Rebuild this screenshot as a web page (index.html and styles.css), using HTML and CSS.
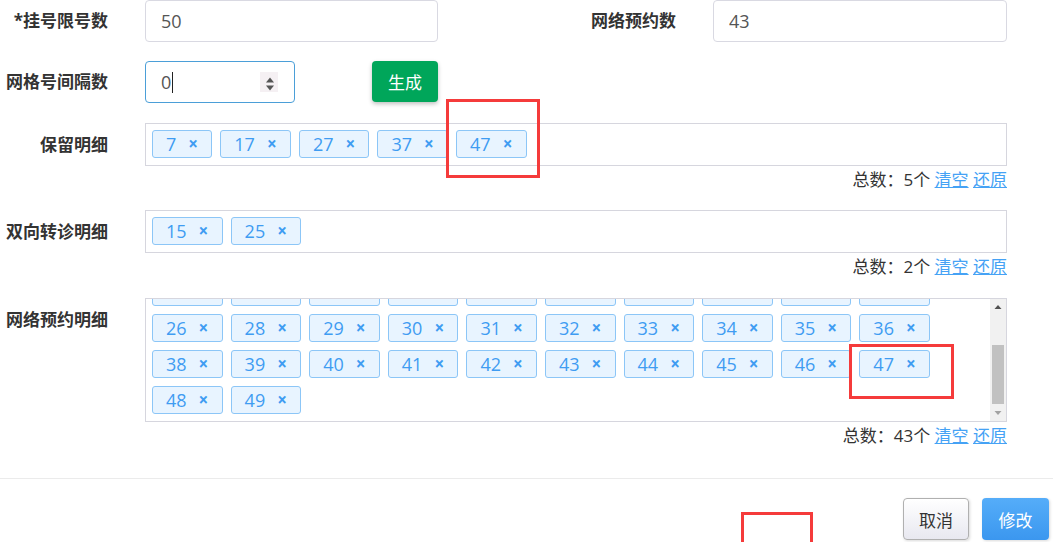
FILE: index.html
```html
<!DOCTYPE html>
<html lang="zh-CN">
<head>
    <meta charset="UTF-8">
    <meta name="viewport" content="width=device-width, initial-scale=1.0">
    <title>号源设置</title>
    <link rel="stylesheet" href="styles.css">
</head>
<body>
    <div class="form">
        <div class="row row-split">
            <div class="field">
                <label class="label">*挂号限号数</label>
                <input class="input" type="text" value="50">
            </div>
            <div class="field">
                <label class="label">网络预约数</label>
                <input class="input" type="text" value="43">
            </div>
        </div>

        <div class="row row-2">
            <label class="label">网格号间隔数</label>
            <div class="num-field">
                <span>0</span><span class="caret"></span>
                <span class="spin">
                    <svg width="18" height="20" viewBox="0 0 18 20"><path d="M6 10.5 L14 10.5 L10 5.5 Z" fill="#555"/><path d="M6 13.5 L14 13.5 L10 18.5 Z" fill="#555"/></svg>
                </span>
            </div>
            <button class="btn btn-green">生成</button>
        </div>

        <!-- 保留明细 -->
        <div class="row row-tags row-3">
            <label class="label">保留明细</label>
            <div class="tag-wrap">
                <div class="tag-box" id="keep-list"></div>
                <div class="summary">总数：5个 <a href="#">清空</a> <a href="#">还原</a></div>
            </div>
        </div>

        <!-- 双向转诊明细 -->
        <div class="row row-tags row-4">
            <label class="label">双向转诊明细</label>
            <div class="tag-wrap">
                <div class="tag-box" id="transfer-list"></div>
                <div class="summary">总数：2个 <a href="#">清空</a> <a href="#">还原</a></div>
            </div>
        </div>

        <!-- 网络预约明细 -->
        <div class="row row-tags row-5">
            <label class="label">网络预约明细</label>
            <div class="tag-wrap">
                <div class="scroll-wrap">
                    <div class="tag-box scroll" id="net-list"></div>
                    <div class="scrollbar">
                        <span class="sb-btn"><svg width="16" height="17" viewBox="0 0 16 17"><path d="M4.5 10 L11.5 10 L8 6 Z" fill="#505050"/></svg></span>
                        <span class="sb-track"><span class="sb-thumb"></span></span>
                        <span class="sb-btn"><svg width="16" height="17" viewBox="0 0 16 17"><path d="M4.5 7 L11.5 7 L8 11 Z" fill="#a3a3a3"/></svg></span>
                    </div>
                </div>
                <div class="summary">总数：43个 <a href="#">清空</a> <a href="#">还原</a></div>
            </div>
        </div>
    </div>

    <div class="footer">
        <button class="btn btn-default">取消</button>
        <button class="btn btn-primary">修改</button>
    </div>

    <div class="mark mark-1"></div>
    <div class="mark mark-2"></div>
    <div class="mark mark-3"></div>

    <script>
        const keep = [7, 17, 27, 37, 47];
        const transfer = [15, 25];
        const net = [];
        for (let i = 1; i <= 49; i++) {
            if (transfer.includes(i)) continue;
            if (keep.includes(i) && i !== 47) continue;
            net.push(i);
        }

        function renderTags(id, list) {
            const box = document.getElementById(id);
            box.innerHTML = '';
            list.forEach(n => {
                box.innerHTML += `<span class="tag">${n}<span class="x">×</span></span>`;
            });
        }

        renderTags('keep-list', keep);
        renderTags('transfer-list', transfer);
        renderTags('net-list', net);

        // 滚动到底部
        const netBox = document.getElementById('net-list');
        netBox.scrollTop = netBox.scrollHeight;
    </script>
</body>
</html>
```

FILE: styles.css
```css
* { margin: 0; padding: 0; box-sizing: border-box; }
body {
    width: 1053px;
    height: 542px;
    overflow: hidden;
    position: relative;
    font-family: "Open Sans", "Noto Sans CJK SC", sans-serif;
    font-size: 17px;
    color: #333;
    background: #fff;
}
.form { width: 1007px; }
.row { display: flex; align-items: flex-start; }
.row-2 { margin-top: 19px; }
.row-3 { margin-top: 20px; }
.row-4 { margin-top: 18px; }
.row-5 { margin-top: 19px; }
.label {
    width: 108px;
    flex: none;
    margin-right: 37px;
    text-align: right;
    font-weight: bold;
    line-height: 42px;
    white-space: nowrap;
}
.row-tags .label { line-height: 44px; }
.row-split {
    display: grid;
    grid-template-columns: 438px 439px;
    column-gap: 130px;
}
.field { display: flex; }
.input {
    flex: 1;
    min-width: 0;
    height: 42px;
    padding: 0 15px;
    border: 1px solid #d9d9e2;
    border-radius: 4px;
    font: inherit;
    font-size: 18px;
    color: #555;
    outline: none;
}
.num-field {
    width: 150px;
    height: 42px;
    display: flex;
    align-items: center;
    padding-left: 15px;
    border: 1px solid #4b9fd8;
    border-radius: 4px;
    font-size: 18px;
    color: #555;
}
.caret {
    width: 1px;
    height: 21px;
    margin-left: 1px;
    background: #222;
}
.spin {
    margin-left: auto;
    margin-right: 16px;
    width: 18px;
    height: 20px;
    background: #f5f0f3;
    display: flex;
}
.btn {
    height: 42px;
    width: 66px;
    border-radius: 4px;
    font: inherit;
    cursor: pointer;
}
.btn-green {
    margin-left: 77px;
    height: 41px;
    border: none;
    background: #00a65a;
    color: white;
    box-shadow: 0 2px 4px rgba(0, 0, 0, 0.25);
}
.tag-wrap { flex: 1; min-width: 0; }
.tag-box {
    min-height: 43px;
    padding: 6px 6px 7px;
    border: 1px solid #d6d6de;
    display: flex;
    flex-wrap: wrap;
    align-content: flex-start;
    gap: 8px;
}
.scroll-wrap { position: relative; }
.tag-box.scroll {
    height: 124px;
    padding-right: 23px;
    overflow-y: scroll;
}
.tag-box.scroll::-webkit-scrollbar { display: none; }
.scrollbar {
    position: absolute;
    top: 1px;
    right: 1px;
    bottom: 1px;
    width: 16px;
    display: flex;
    flex-direction: column;
    background: #f1f1f1;
}
.sb-btn { height: 17px; display: flex; }
.sb-track {
    flex: 1;
    display: flex;
    flex-direction: column;
    justify-content: flex-end;
    padding: 0 2px;
}
.sb-thumb { height: 59px; background: #c1c1c1; }
.tag {
    height: 28px;
    display: flex;
    align-items: center;
    padding: 0 14px 0 13px;
    border: 1px solid #8cc6f7;
    border-radius: 3px;
    background: #e8f4ff;
    color: #3f9cf2;
    font-size: 18px;
    line-height: 26px;
}
.tag .x {
    width: 9px;
    margin-left: 12px;
    text-align: center;
    font-size: 17px;
    font-weight: bold;
}
.summary {
    margin-top: 2px;
    text-align: right;
    line-height: 24px;
}
.summary a { color: #45a2f5; }
.footer {
    margin-top: 30px;
    padding: 19px 4px 0 0;
    border-top: 1px solid #ebebeb;
    display: flex;
    justify-content: flex-end;
    gap: 13px;
}
.btn-default {
    border: 1px solid #b0b0b0;
    background: linear-gradient(#ffffff, #e8e8f0);
    color: #333;
    box-shadow: 1px 1px 3px rgba(0, 0, 0, 0.15);
}
.btn-primary {
    width: 67px;
    border: none;
    background: linear-gradient(#55adf9, #3b97ef);
    color: white;
    box-shadow: 1px 1px 3px rgba(0, 0, 0, 0.15);
}
.mark {
    position: absolute;
    border: 3px solid #f53b3b;
}
.mark-1 { left: 446px; top: 99px; width: 94px; height: 79px; }
.mark-2 { left: 849px; top: 344px; width: 105px; height: 55px; }
.mark-3 { left: 741px; top: 512px; width: 72px; height: 40px; }
```
